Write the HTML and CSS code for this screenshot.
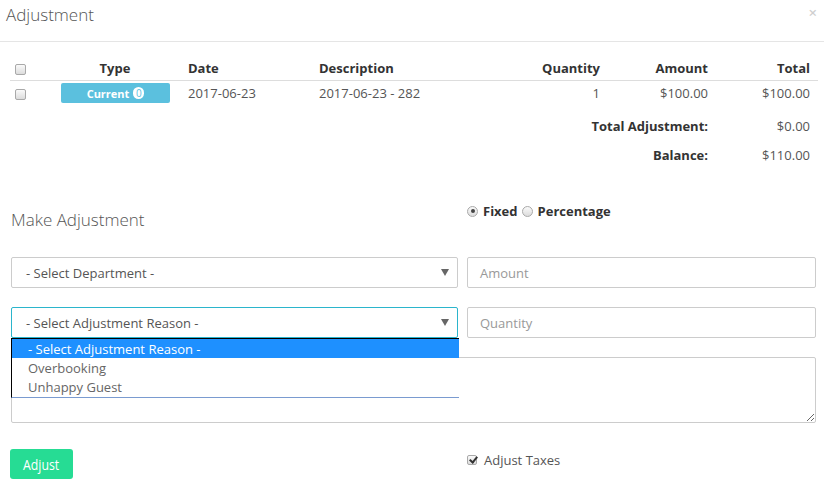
FILE: index.html
```html
<!DOCTYPE html>
<html>
<head>
<meta charset="utf-8">
<link rel="stylesheet" href="styles.css">
</head>
<body>
<div class="modal">
  <div class="modal-header">
    <h3 class="modal-title">Adjustment</h3>
    <span class="close">×</span>
  </div>
  <div class="modal-body">
    <table class="items">
      <colgroup>
        <col class="c1"><col class="c2"><col class="c3"><col class="c4"><col class="c5"><col class="c6"><col class="c7">
      </colgroup>
      <thead>
        <tr>
          <th class="chk"><span class="cb"></span></th>
          <th class="center">Type</th>
          <th>Date</th>
          <th>Description</th>
          <th class="right">Quantity</th>
          <th class="right">Amount</th>
          <th class="right">Total</th>
        </tr>
      </thead>
      <tbody>
        <tr class="item">
          <td class="chk"><span class="cb"></span></td>
          <td><span class="label">Current <span class="pill">0</span></span></td>
          <td>2017-06-23</td>
          <td>2017-06-23 - 282</td>
          <td class="right">1</td>
          <td class="right">$100.00</td>
          <td class="right">$100.00</td>
        </tr>
        <tr class="sum first">
          <td colspan="6" class="right strong">Total Adjustment:</td>
          <td class="right">$0.00</td>
        </tr>
        <tr class="sum">
          <td colspan="6" class="right strong">Balance:</td>
          <td class="right">$110.00</td>
        </tr>
      </tbody>
    </table>

    <div class="form">
      <div class="grid top">
        <h4 class="section-title">Make Adjustment</h4>
        <div class="radios">
          <span class="rb checked"></span><span class="rlabel">Fixed</span>
          <span class="rb"></span><span class="rlabel">Percentage</span>
        </div>
      </div>
      <div class="grid row">
        <div class="select"><span>- Select Department -</span><span class="arrow"></span></div>
        <div class="input placeholder">Amount</div>
      </div>
      <div class="grid row">
        <div class="select-wrap">
          <div class="select focus"><span>- Select Adjustment Reason -</span><span class="arrow"></span></div>
          <ul class="dropdown">
            <li class="selected">- Select Adjustment Reason -</li>
            <li>Overbooking</li>
            <li>Unhappy Guest</li>
          </ul>
        </div>
        <div class="input placeholder">Quantity</div>
      </div>
      <textarea class="notes"></textarea>
      <div class="grid bottom">
        <div><button class="btn"><span>Adjust</span></button></div>
        <div class="taxes"><span class="cb checked"></span><span>Adjust Taxes</span></div>
      </div>
    </div>
  </div>
</div>
</body>
</html>
```

FILE: styles.css
```css
* { box-sizing: border-box; }
html, body { margin: 0; padding: 0; background: #fff; }
body {
  font-family: "Open Sans", "Noto Sans", sans-serif;
  font-size: 13px;
  color: #555;
  width: 824px;
  height: 481px;
  overflow: hidden;
}

.modal-header {
  height: 42px;
  border-bottom: 1px solid #e5e5e5;
  display: flex;
  justify-content: space-between;
  align-items: flex-start;
  padding: 2px 6px 0 6px;
}
.modal-title {
  margin: 0;
  font-size: 17px;
  font-weight: 300;
  line-height: 26px;
  color: #555;
}
.close {
  color: #cfcfcf;
  font-size: 15px;
  line-height: 15px;
  margin-top: 3px;
  margin-right: 1px;
  font-weight: 600;
}

.modal-body { padding: 15px 0 0 10px; }

.items {
  width: 808px;
  border-collapse: collapse;
  table-layout: fixed;
}
.c1 { width: 42px; }
.c2 { width: 126px; }
.c3 { width: 131px; }
.c4 { width: 211px; }
.c5 { width: 88px; }
.c6 { width: 108px; }
.c7 { width: 102px; }

.items th, .items td {
  padding: 0 8px 0 10px;
  text-align: left;
  vertical-align: middle;
  white-space: nowrap;
}
.items th {
  height: 23px;
  font-weight: 700;
  color: #333;
  border-bottom: 1px solid #ddd;
}
.items .item td { height: 25px; }
.items .item td:nth-child(2) { padding-top: 1px; }
.items .sum td { height: 29px; }
.items .sum.first td { height: 35px; padding-top: 6px; }
.items .right { text-align: right; padding-right: 8px; }
.items .center { text-align: center; padding: 0; }
.items .strong { font-weight: 700; color: #333; }
.items .chk { padding-left: 5px; }
.items td:nth-child(2) { padding-left: 9px; padding-right: 8px; }

.cb {
  display: inline-block;
  width: 11px;
  height: 11px;
  border: 1px solid #a9a9a9;
  border-radius: 2px;
  background: linear-gradient(#fafafa, #dcdcdc);
  vertical-align: middle;
  position: relative;
}
.cb.checked::after {
  content: "";
  position: absolute;
  left: 3px;
  top: 0px;
  width: 3px;
  height: 6px;
  border: solid #333;
  border-width: 0 2px 2px 0;
  transform: rotate(40deg);
}

.label {
  display: flex;
  align-items: center;
  justify-content: center;
  gap: 4px;
  width: 109px;
  height: 20px;
  background: #5bc0de;
  color: #fff;
  font-size: 11px;
  font-weight: 700;
  border-radius: 2px;
}
.pill {
  display: inline-block;
  min-width: 11px;
  height: 12px;
  line-height: 13px;
  border-radius: 6px;
  background: #fff;
  color: #5bc0de;
  font-size: 10px;
  font-weight: 400;
  text-align: center;
  padding: 0 1px;
}

.form { margin-left: 1px; width: 805px; margin-top: 31px; }
.grid {
  display: grid;
  grid-template-columns: 447px 349px;
  column-gap: 9px;
}
.grid.top { height: 57px; }
.section-title {
  margin: 0;
  padding-top: 8px;
  font-size: 17px;
  font-weight: 300;
  line-height: 24px;
  color: #555;
}
.radios {
  display: flex;
  align-items: center;
  height: 18px;
  margin-top: 2px;
  font-weight: 700;
  color: #333;
}
.rb {
  display: inline-block;
  width: 11px;
  height: 11px;
  border: 1px solid #a9a9a9;
  border-radius: 50%;
  background: linear-gradient(#fafafa, #dcdcdc);
  position: relative;
}
.rb.checked::after {
  content: "";
  position: absolute;
  left: 2.5px;
  top: 2.5px;
  width: 4px;
  height: 4px;
  border-radius: 50%;
  background: #444;
}
.rlabel { margin: 0 4px 0 5px; }

.row { margin-bottom: 19px; }
.select, .input {
  height: 31px;
  border: 1px solid #ccc;
  border-radius: 2px;
  display: flex;
  align-items: center;
  justify-content: space-between;
  padding: 0 8px 0 14px;
  color: #555;
}
.select.focus { border-color: #2bb5cc; }
.arrow {
  width: 0;
  height: 0;
  border-left: 4px solid transparent;
  border-right: 4px solid transparent;
  border-top: 7px solid #666;
}
.input { padding-left: 12px; }
.placeholder { color: #999; }

.select-wrap { position: relative; }
.dropdown {
  position: absolute;
  left: 0;
  top: 31px;
  width: 448px;
  margin: 0;
  padding: 0 0 1px 0;
  list-style: none;
  background: #fff;
  border-top: 1px solid #000;
  border-left: 1px solid #000;
  border-bottom: 1px solid #7a9bd0;
  z-index: 5;
}
.dropdown li {
  height: 19px;
  line-height: 20px;
  padding-left: 16px;
  color: #666;
}
.dropdown li.selected { background: #1e90ff; color: #fff; }

.notes {
  display: block;
  width: 805px;
  height: 66px;
  border: 1px solid #ccc;
  border-radius: 2px;
  margin: 0 0 26px 0;
  font-family: inherit;
  resize: both;
}

.bottom { align-items: start; }
.btn {
  margin-left: -1px;
  width: 63px;
  height: 30px;
  border: none;
  border-radius: 3px;
  background: #26dc94;
  color: #fff;
  font-family: "Open Sans", sans-serif;
  font-size: 15px;
  padding: 0;
  display: flex;
  align-items: center;
  justify-content: center;
}
.btn span { display: inline-block; transform: scaleX(0.82); }
.taxes {
  display: flex;
  align-items: center;
  gap: 7px;
  padding-top: 3px;
  height: 18px;
  color: #555;
}
.taxes .cb { width: 10px; height: 10px; }
.taxes .cb.checked::after { left: 2.5px; top: -1px; }
```
